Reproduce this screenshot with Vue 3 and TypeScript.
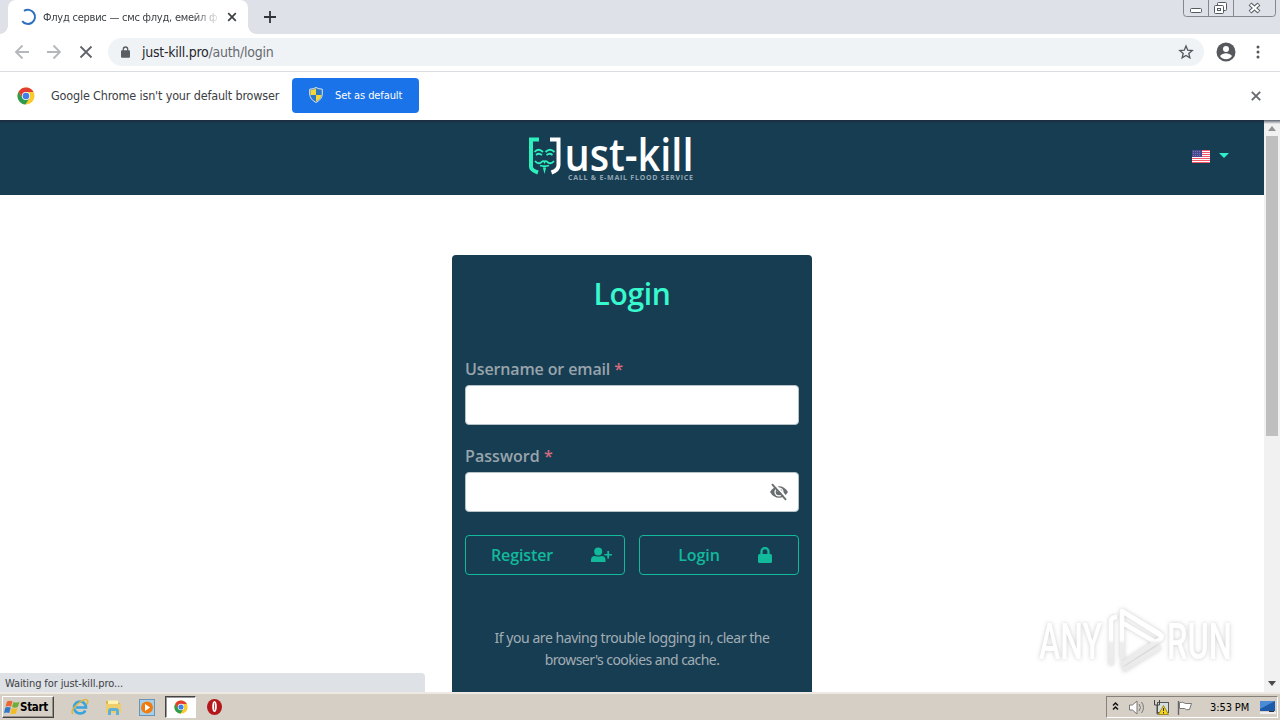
<script setup lang="ts">
import { ref } from 'vue'

const username = ref('')
const password = ref('')
const stripes: number[] = [0, 2, 4, 6, 8, 10, 12]
</script>

<template>
  <div class="screen">
    <svg class="defs" width="0" height="0" aria-hidden="true">
      <symbol id="chrome" viewBox="0 0 18 18">
        <circle cx="9" cy="9" r="8.5" fill="#fbc928" />
        <path d="M1.6 4.8A8.5 8.5 0 0 0 8.4 17.5L12.5 11 9 9 5.5 11z" fill="#2c9c53" />
        <path d="M1.6 4.8A8.5 8.5 0 0 1 16.5 5H9L5.2 10.5z" fill="#e23d30" />
        <circle cx="9" cy="9" r="4.1" fill="#fff" />
        <circle cx="9" cy="9" r="3.3" fill="#3f7fe8" />
      </symbol>
    </svg>

    <header class="tabs">
      <div class="tab">
        <svg class="spinner" width="18" height="18" viewBox="0 0 18 18"><path d="M5 2.9A7.1 7.1 0 1 1 3.2 13.1" fill="none" stroke="#2d6fc0" stroke-width="2" /></svg>
        <span class="tab-title">Флуд сервис — смс флуд, емейл ф</span>
        <svg class="tab-close" width="10" height="10" viewBox="0 0 10 10"><path d="M1.2 1.2 8.8 8.8M8.800 1.200 1.200 8.800" stroke="#3c4043" stroke-width="1.7" /></svg>
      </div>
      <svg class="plus" width="12" height="12" viewBox="0 0 12 12"><path d="M6 0v12M0 6h12" stroke="#303338" stroke-width="1.8" /></svg>
      <svg class="win" width="94" height="18" viewBox="0 0 94 18" fill="none" stroke="#83878f">
        <path d="M.5 0v13.5q0 3 3 3h86q3 0 3-3V0M25.500 0v16.500M50.500 0v16.500" />
        <rect x="7.500" y="8.500" width="11" height="4" rx="1" fill="#fff" stroke="#555960" />
        <rect x="34.500" y="2.500" width="9" height="8" rx="1" fill="#fff" stroke="#555960" />
        <rect x="31.500" y="5.500" width="9" height="8" rx="1" fill="#fff" stroke="#555960" />
        <rect x="34.500" y="8.500" width="3" height="2" stroke="#555960" />
        <path d="M67 4l9 8M76 4l-9 8" stroke="#555960" stroke-width="4.200" />
        <path d="M67.500 4.500l8 7M75.500 4.500l-8 7" stroke="#fff" stroke-width="2.200" />
      </svg>
    </header>

    <div class="toolbar">
      <svg class="nav" width="80" height="16" viewBox="0 0 80 16" fill="none">
        <path d="M15 8H2M8.500 1.500 2 8l6.500 6.500M33 8h13M39.500 1.500 46 8l-6.500 6.500" stroke="#b5b7ba" stroke-width="1.800" />
        <path d="M66.500 2.500 77.500 13.500M77.500 2.500 66.500 13.500" stroke="#5f6368" stroke-width="1.800" />
      </svg>
      <div class="omnibox">
        <svg width="9" height="12" viewBox="0 0 9 12"><path d="M2.300 5V3.200a2.200 2.200 0 0 1 4.400 0V5" fill="none" stroke="#5a5d62" stroke-width="1.300" /><rect y="4.200" width="9" height="7.500" rx="1" fill="#5a5d62" /></svg>
        <span class="url">just-kill.pro<i>/auth/login</i></span>
        <svg class="star" width="16" height="16" viewBox="0 0 24 24"><path d="M12 3l2.600 6.200 6.700.6-5.100 4.400 1.600 6.600L12 17.300l-5.800 3.500 1.600-6.600-5.100-4.400 6.700-.6z" fill="none" stroke="#55585d" stroke-width="2" /></svg>
      </div>
      <svg class="avatar" width="20" height="20" viewBox="0 0 20 20"><circle cx="10" cy="10" r="9.500" fill="#55585d" /><circle cx="10" cy="7" r="3" fill="#fff" /><path d="M4 14c1.500-2 4-2.800 6-2.800s4.500.8 6 2.800c-1.500 2.200-3.700 3.200-6 3.200S5.500 16.200 4 14z" fill="#fff" /></svg>
      <svg class="dots" width="4" height="14" viewBox="0 0 4 14" fill="#55585d"><circle cx="2" cy="2" r="1.500" /><circle cx="2" cy="7" r="1.500" /><circle cx="2" cy="12" r="1.500" /></svg>
    </div>

    <div class="infobar">
      <svg width="18" height="18"><use href="#chrome" /></svg>
      <span class="info-text">Google Chrome isn't your default browser</span>
      <button class="set-default">
        <svg width="14" height="16" viewBox="0 0 14 16"><path d="M7 .5Q9.500 2 13.300 2.200V7Q13 12.500 7 15.500 1 12.500.7 7V2.200Q4.500 2 7 .5z" fill="#2d77c5" stroke="#dce6ee" /><path d="M7 1.500V8H1.500V3Q5 2.700 7 1.500zM7 8h5.500Q12 12 7 14.500z" fill="#f5d63a" /></svg>
        <span>Set as default</span>
      </button>
      <svg class="info-close" width="10" height="10" viewBox="0 0 10 10"><path d="M.8.8 9.200 9.200M9.200.8.8 9.200" stroke="#66696d" stroke-width="1.900" /></svg>
    </div>

    <div class="viewport">
      <main class="page">
        <nav class="site-nav">
          <svg class="logo" width="170" height="50" viewBox="0 0 170 50">
            <path d="M12 6.500H4V34q0 3 7 5.500" fill="none" stroke="#2df0bd" stroke-width="4" />
            <path d="M23 6.500h8.500V32q0 5-7 7.500" fill="none" stroke="#fff" stroke-width="4" />
            <g fill="none" stroke="#2df0bd" stroke-width="1.800">
              <path d="M7.500 19q4-4.500 8.500 0M18.500 19q4.500-4.500 9 0M9 22q3-2.500 6 .2M19.500 22.200q3-2.700 6-.2" />
              <path d="M8 28q3 3.500 6 1.500 2.500-2.500 3.500-.5 1-2 3.500.5 3 2 6-1.500M13 32.500q4.500 1.500 9 0" />
            </g>
            <path d="M15.900 34.500h3.200L17.500 41z" fill="#2df0bd" />
            <text x="37.500" y="38" class="logo-name" textLength="129" lengthAdjust="spacingAndGlyphs">ust-kill</text>
            <text x="41" y="46.500" class="logo-tag" textLength="125" lengthAdjust="spacing">CALL &amp; E-MAIL FLOOD SERVICE</text>
          </svg>
          <button class="language" aria-label="English">
            <svg width="18" height="13" viewBox="0 0 18 13"><rect width="18" height="13" fill="#fff" /><rect v-for="y in stripes" :key="y" :y="y" width="18" height="1" fill="#f0596b" /><rect width="10" height="7" fill="#474a91" /><path d="M1 1.500h8M1 3.500h8M1 5.500h8" stroke="#8b8db9" stroke-width=".7" stroke-dasharray="1 1" /></svg>
            <svg class="caret" width="10" height="5" viewBox="0 0 10 5"><path d="M0 0h10L5 5z" fill="#2df0c9" /></svg>
          </button>
        </nav>

        <form class="card" @submit.prevent>
          <h1>Login</h1>
          <label for="user">Username or email <b>*</b></label>
          <input id="user" v-model="username" type="text" />
          <label for="pass" class="second">Password <b>*</b></label>
          <div class="password">
            <input id="pass" v-model="password" type="password" />
            <svg class="eye" width="20" height="18" viewBox="0 0 20 18">
              <path d="M1 9q3.500-5.800 9-5.800T19 9q-3.500 5.800-9 5.800T1 9z" fill="#6b6e71" />
              <circle cx="10" cy="9" r="4.600" fill="#fff" /><circle cx="10" cy="9" r="3.300" fill="#6b6e71" /><circle cx="9" cy="7.800" r="1.200" fill="#fff" />
              <path d="M4.500 0 18.500 15.500" stroke="#fff" stroke-width="2" /><path d="M3 1.200 17 16.800" stroke="#6b6e71" stroke-width="1.900" />
            </svg>
          </div>
          <div class="actions">
            <button><span>Register</span><svg class="person" width="21" height="16" viewBox="0 0 21 16" fill="#12b99b"><circle cx="7.200" cy="4.500" r="4" /><path d="M0 15v-2q0-4 4-4 3 1.200 6.500 0 4 0 4 4v2zM16.300 4h1.800v2.900H21v1.700h-2.900v2.900h-1.800V8.600h-2.900V6.900h2.900z" /></svg></button>
            <button><span>Login</span><svg class="lock" width="14" height="16" viewBox="0 0 14 16"><path d="M3.500 8V4.500a3.500 3.500 0 0 1 7 0V8" fill="none" stroke="#12b99b" stroke-width="2.300" /><rect y="7" width="14" height="9" rx="1.500" fill="#12b99b" /></svg></button>
          </div>
          <p><span class="line-a">If you are having trouble logging in, clear the</span><br /><span class="line-b">browser's cookies and cache.</span></p>
        </form>
      </main>

      <div class="scrollbar">
        <svg width="8" height="5" viewBox="0 0 8 5"><path d="M0 5h8L4 0z" fill="#929292" /></svg>
        <i></i>
        <svg width="8" height="5" viewBox="0 0 8 5"><path d="M0 0h8L4 5z" fill="#4b4b4b" /></svg>
      </div>

      <div class="status"><span>Waiting for just-kill.pro...</span></div>

      <svg class="watermark" width="210" height="76" viewBox="0 0 210 76">
        <defs>
          <linearGradient id="fade" x1="0" y1="0" x2="0" y2="76" gradientUnits="userSpaceOnUse">
            <stop offset=".5" stop-color="#fff" /><stop offset=".54" stop-color="#ededed" /><stop offset="1" stop-color="#e9e9e9" />
          </linearGradient>
        </defs>
        <g class="mark">
          <g transform="translate(0 57) scale(1 1.18)">
            <text x="9" y="0" textLength="63" lengthAdjust="spacingAndGlyphs">ANY</text>
            <text x="137" y="0" textLength="65" lengthAdjust="spacingAndGlyphs">RUN</text>
          </g>
          <path d="M87 15q-6 0-6 5v43M92 57V9l38 23q4 3-1 6L91 63M93 21l32 19M93 68l37-23M92 9l41 26" />
        </g>
      </svg>
    </div>

    <footer class="taskbar">
      <button class="start">
        <svg width="16" height="15" viewBox="0 0 16 15"><path d="M3 1.500Q6 0 8.500 1.500L7 6.700Q4.500 5.500 1.500 6.700z" fill="#ed6635" /><path d="M9.500 2q3 1.300 6-.3L13.800 7q-3 1.300-5.800 0z" fill="#70ad37" /><path d="M1.200 7.700q3-1.300 5.500.1L5.200 13Q2.600 11.800 0 13z" fill="#3378c7" /><path d="M7.800 8q2.800 1.400 5.700.1L12 13.500q-3 1.200-5.800-.2z" fill="#f2bd24" /></svg>
        <span>Start</span>
      </button>
      <svg class="task ie" width="18" height="18" viewBox="0 0 18 18" fill="none"><path d="M14.300 12.500Q13 15.500 9 15.500a6 6 0 1 1 6-6H5" stroke="#36a4df" stroke-width="2.600" /><path d="M2 16Q-1 13 6 6.500 14-.5 16.500 2.500q1 1.500-.8 4" stroke="#e1b63d" stroke-width="1.500" /></svg>
      <svg class="task folder" width="17" height="17" viewBox="0 0 17 17"><path d="M1 2h6l1 2h7v10H1z" fill="#d9b554" /><path d="M3 1.500h10V6H3z" fill="#fff2ad" /><path d="M1 5h15v9H1z" fill="#eecd6b" /><path d="M3 16v-4q0-3 3-3h5q3 0 3 3v4h-3v-4H6v4z" fill="#5fb0d6" /></svg>
      <svg class="task media" width="16" height="17" viewBox="0 0 16 17"><rect x=".5" y=".5" width="15" height="16" fill="#a8cfe8" stroke="#6994b7" /><circle cx="8" cy="8.500" r="6" fill="#ef7c13" /><path d="M6 5v7l5-3.500z" fill="#fff" /></svg>
      <div class="running"><svg width="14" height="14"><use href="#chrome" /></svg></div>
      <svg class="task opera" width="15" height="16" viewBox="0 0 15 16"><ellipse cx="7.500" cy="8" rx="7.500" ry="8" fill="#b5161c" /><ellipse cx="7.500" cy="7.500" rx="2.300" ry="5.500" fill="#fff" /><ellipse cx="7.500" cy="7.500" rx=".5" ry="4" fill="#c9484c" /></svg>
      <div class="tray">
        <svg width="86" height="20" viewBox="0 0 86 20" fill="none">
          <path d="M1 8.500l2.500-2.500L6 8.500M1 12.500l2.500-2.500L6 12.500" stroke="#111" stroke-width="1.500" />
          <path d="M17.500 8h3L25 4v13l-4.500-4h-3z" fill="#fff" stroke="#777" /><path d="M27 7q3 3.500 0 7M29.500 5q4 5.500 0 11" stroke="#777" />
          <rect x="45.500" y="5.500" width="11" height="10" fill="#d6dfdf" stroke="#555" /><path d="M42.500 3v5h5V3M45 8v9h3" stroke="#444" /><path d="M51.500 8.500 56.500 17.500H46.500z" fill="#f5d41e" stroke="#a18b21" /><path d="M51.500 11v3M51.500 15v1.500" stroke="#333" />
          <path d="M66.500 4v14" stroke="#666" stroke-width="1.400" /><path d="M67.500 5.500q3-1 6 1h6l-2 6q-3 1-5-1h-5z" fill="#fff" stroke="#777" />
        </svg>
        <time>3:53 PM</time>
        <svg width="16" height="13" viewBox="0 0 16 13"><path d="M0 0h15v10H0z" fill="#1d5baa" /><path d="M0 0h15L0 8z" fill="#4b8bd5" /><path d="M0 11h16v2H0z" fill="#eee" /><path d="M9 10h5v1H9z" fill="#333" /></svg>
      </div>
    </footer>
  </div>
</template>

<style>
body { margin: 0; overflow: hidden; }
</style>

<style scoped>
.screen { width: 1280px; height: 720px; display: flex; flex-direction: column; overflow: hidden; position: relative; background: #fff; font-family: "DejaVu Sans Condensed", "DejaVu Sans", sans-serif; }
.screen *, .screen *::before, .screen *::after { box-sizing: border-box; }
svg { display: block; flex: none; }
.defs { position: absolute; }
button { padding: 0; border: 0; background: none; font: inherit; }
.tabs { flex: 0 0 34px; display: flex; background: #dee1e8; padding-left: 8px; }
.tab { width: 240px; height: 34px; background: #fff; border-radius: 8px 8px 0 0; display: flex; align-items: center; padding-left: 11px; position: relative; }
.tab::before, .tab::after { content: ""; position: absolute; bottom: 0; width: 8px; height: 8px; }
.tab::before { left: -8px; background: radial-gradient(circle at 0 0, transparent 7.5px, #fff 8px); }
.tab::after { right: -8px; background: radial-gradient(circle at 100% 0, transparent 7.5px, #fff 8px); }
.tab-title { margin-left: 6px; width: 175px; overflow: hidden; white-space: nowrap; font-size: 11px; color: #3c4043; letter-spacing: -.24px; -webkit-mask-image: linear-gradient(90deg, #000 86%, transparent 102%); }
.tab-close { margin-left: 9px; }
.plus { margin: 11px 0 0 16px; }
.win { margin: 0 3px 0 auto; }
.toolbar { flex: 0 0 38px; display: flex; align-items: center; padding: 0 20px 1px 14px; border-bottom: 1px solid #dadce0; }
.omnibox { width: 1096px; height: 28px; margin-left: 14px; border-radius: 14px; background: #f0f3f6; display: flex; align-items: center; padding: 0 10px 0 13px; }
.url { margin-left: 12px; font-size: 14px; letter-spacing: -.26px; color: #24272b; line-height: 18px; }
.url i { font-style: normal; color: #666a6f; }
.star { margin-left: auto; }
.avatar { margin-left: 12px; }
.dots { margin-left: auto; }
.infobar { flex: 0 0 48px; display: flex; align-items: center; padding: 0 19px 0 17px; }
.info-text { width: 229px; margin: -2px 0 0 16px; font-size: 12.500px; letter-spacing: -.17px; color: #3c4043; white-space: nowrap; }
.set-default { width: 127px; height: 35px; margin: -2px 0 0 12px; border-radius: 4px; background: #1a73e8; color: #fff; display: flex; align-items: center; padding-left: 17px; font-size: 11px; letter-spacing: -.09px; }
.set-default span { margin-left: 12px; white-space: nowrap; }
.info-close { margin-left: auto; }
.viewport { flex: 0 0 572px; display: flex; position: relative; overflow: hidden; }
.viewport::after { content: ""; position: absolute; left: 0; top: 0; width: 1280px; height: 4px; background: linear-gradient(#1d2635b0, #1d263500); }
.page { width: 1264px; display: flex; flex-direction: column; align-items: center; font-family: "Open Sans", sans-serif; }
.site-nav { width: 100%; flex: 0 0 75px; background: #173d53; display: grid; grid-template-columns: 1fr 170px 1fr; }
.logo { grid-column: 2; margin: 13px 0 0 -20px; overflow: visible; }
.logo-name { font: 600 45px "Open Sans", sans-serif; fill: #fff; }
.logo-tag { font: 700 7px "Open Sans", sans-serif; fill: #93a6b2; }
.language { display: flex; align-items: center; gap: 9px; justify-content: flex-end; padding: 0 35px 2px 0; }
.caret { margin-top: -2px; }
.card { width: 360px; flex: 0 0 480px; margin-top: 60px; padding: 17px 13px 0; border-radius: 4px; background: #173d53; color: #99a4ab; }
h1 { margin: 0 0 53px; text-align: center; color: #38f8cd; font-size: 30px; line-height: 44px; font-weight: 600; letter-spacing: -.35px; }
label { display: block; height: 16px; line-height: 0; font-size: 16px; font-weight: 600; letter-spacing: -.13px; }
label b { color: #d66b7b; font-weight: 600; }
input { display: block; width: 334px; height: 40px; border: 1px solid #b7c1c8; border-radius: 4px; background: #fff; font: 16px "Open Sans", sans-serif; padding: 0 12px; outline: 0; }
.second { margin-top: 31px; letter-spacing: .05px; }
.password { position: relative; }
.eye { position: absolute; right: 10px; top: 11px; }
.actions { display: grid; grid-template-columns: 160px 160px; gap: 14px; margin-top: 23px; }
.actions button { height: 40px; border: 1px solid #12b99b; border-radius: 4px; display: flex; align-items: center; color: #12b99b; font-size: 16px; font-weight: 600; letter-spacing: -.1px; }
.actions span { width: 112px; text-align: center; }
.actions button:last-child span { width: 118px; }
.person { margin-left: 13px; }
p { margin: 52px 0 0; text-align: center; font: 14px/22px "Noto Sans", sans-serif; color: #a2adb4; white-space: nowrap; }
.line-a { letter-spacing: -.45px; }
.line-b { letter-spacing: -.57px; }
.scrollbar { width: 16px; background: #f1f1f1; display: flex; flex-direction: column; align-items: center; padding-top: 6px; }
.scrollbar i { width: 12px; height: 300px; background: #bfbfbf; margin: 5px 0 245px; }
.status { position: absolute; left: 0; bottom: 0; width: 425px; height: 19px; background: #dee1e6; border-radius: 0 4px 0 0; padding-left: 5px; font-size: 11px; line-height: 21px; color: #3c4043; letter-spacing: -.11px; }
.watermark { position: absolute; left: 1030px; top: 482px; overflow: visible; filter: drop-shadow(0 0 2px #aaa9); }
.mark text { font: 500 43px Roboto, sans-serif; fill: url(#fade); }
.mark path { fill: none; stroke: url(#fade); stroke-width: 4.500; stroke-linejoin: round; }
.taskbar { flex: 0 0 28px; background: #d6cfc5; border-top: 2px solid #eeeae3; display: flex; align-items: center; position: relative; }
.start { width: 52px; height: 22px; margin-left: 2px; border: 1px solid; border-color: #fff #444 #444 #fff; box-shadow: inset -1px -1px #969086; display: flex; align-items: center; padding-left: 1px; font-weight: 700; font-size: 11.500px; letter-spacing: -.3px; color: #000; }
.ie { margin-left: 17px; }
.folder { margin-left: 16px; }
.media { margin-left: 17px; }
.running { margin-left: 10px; width: 31px; height: 22px; background: #fff; border: 1px solid; border-color: #444 #fff #fff #444; box-shadow: inset 1px 1px #999; display: grid; place-items: center; }
.opera { margin-left: 11px; }
.tray { margin: 0 2px 0 auto; width: 172px; height: 22px; border: 1px solid; border-color: #87817b #fff #fff #87817b; display: flex; align-items: center; padding-left: 5px; }
.tray time { margin-left: 12px; width: 41px; font-size: 11px; letter-spacing: -.1px; white-space: nowrap; }
.tray time + svg { margin-left: 9px; }
</style>
